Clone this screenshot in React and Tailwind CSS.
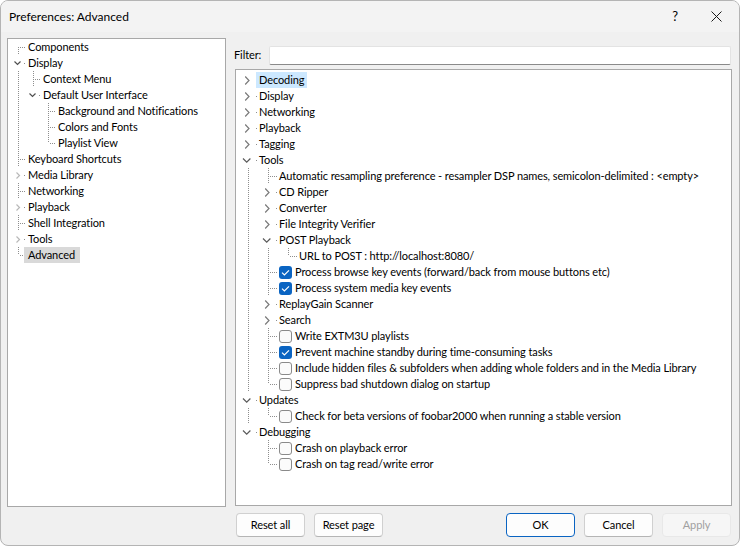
import React from "react";

// tree look per panel: cell width, line x inside the cell, chevron shapes
const LEFT = {
  cell: "w-[15px]",
  w: 15,
  x: 7,
  stub: 13,
  text: "-ml-[2px] pl-[4px] pr-[5px]",
  sel: "bg-[#d9d9d9]",
  closed: { points: "5.5,5.5 8.5,8.5 5.5,11.5", color: "#b8b8b8" },
  open: { points: "3.5,6.5 6.5,9.5 9.5,6.5", color: "#505050" },
};

const RIGHT = {
  cell: "w-[20px]",
  w: 20,
  x: 10,
  stub: 18,
  text: "-ml-[2px] pl-[3px] pr-[3px]",
  sel: "bg-[#cce8ff]",
  closed: { points: "7.2,4.5 11,8.5 7.2,12.5", color: "#7a7a7a" },
  open: { points: "5,6.5 8.7,10.2 12.4,6.5", color: "#5a5a5a" },
};

const leftRows = [
  { g: ["r"], label: "Components" },
  { g: ["o"], label: "Display" },
  { g: ["v", "t"], label: "Context Menu" },
  { g: ["v", "o"], label: "Default User Interface" },
  { g: ["v", "n", "t"], label: "Background and Notifications" },
  { g: ["v", "n", "t"], label: "Colors and Fonts" },
  { g: ["v", "n", "l"], label: "Playlist View" },
  { g: ["t"], label: "Keyboard Shortcuts" },
  { g: ["c"], label: "Media Library" },
  { g: ["t"], label: "Networking" },
  { g: ["c"], label: "Playback" },
  { g: ["t"], label: "Shell Integration" },
  { g: ["c"], label: "Tools" },
  { g: ["l"], label: "Advanced", selected: true },
];

const rightRows = [
  { g: ["c"], label: "Decoding", selected: true },
  { g: ["c"], label: "Display" },
  { g: ["c"], label: "Networking" },
  { g: ["c"], label: "Playback" },
  { g: ["c"], label: "Tagging" },
  { g: ["o"], label: "Tools" },
  { g: ["v", "t"], label: "Automatic resampling preference - resampler DSP names, semicolon-delimited : <empty>" },
  { g: ["v", "c"], label: "CD Ripper" },
  { g: ["v", "c"], label: "Converter" },
  { g: ["v", "c"], label: "File Integrity Verifier" },
  { g: ["v", "o"], label: "POST Playback" },
  { g: ["v", "v", "l"], label: "URL to POST : http://localhost:8080/" },
  { g: ["v", "t"], cb: true, label: "Process browse key events (forward/back from mouse buttons etc)" },
  { g: ["v", "t"], cb: true, label: "Process system media key events" },
  { g: ["v", "c"], label: "ReplayGain Scanner" },
  { g: ["v", "c"], label: "Search" },
  { g: ["v", "t"], cb: false, label: "Write EXTM3U playlists" },
  { g: ["v", "t"], cb: true, label: "Prevent machine standby during time-consuming tasks" },
  { g: ["v", "t"], cb: false, label: "Include hidden files & subfolders when adding whole folders and in the Media Library" },
  { g: ["v", "l"], cb: false, label: "Suppress bad shutdown dialog on startup" },
  { g: ["o"], label: "Updates" },
  { g: ["v", "l"], cb: false, label: "Check for beta versions of foobar2000 when running a stable version" },
  { g: ["o"], label: "Debugging" },
  { g: ["n", "t"], cb: false, label: "Crash on playback error" },
  { g: ["n", "l"], cb: false, label: "Crash on tag read/write error" },
];

const DOT = { stroke: "#8e8e8e", strokeWidth: 1, strokeDasharray: "1 1", shapeRendering: "crispEdges" };

// one indent column of the tree: dotted guide lines or an expander
function Cell({ type, t }) {
  const X = t.x + 0.5;
  const arm = type === "t" || type === "l" || type === "r";
  return (
    <svg width={t.w} height="16" className={`${t.cell} shrink-0`}>
      {(type === "v" || type === "t") && <line x1={X} y1="0" x2={X} y2="16" {...DOT} />}
      {type === "l" && <line x1={X} y1="0" x2={X} y2="8" {...DOT} />}
      {type === "r" && <line x1={X} y1="8" x2={X} y2="16" {...DOT} />}
      {arm && <line x1={X + 1} y1="8.5" x2={t.w} y2="8.5" {...DOT} />}
      {(type === "c" || type === "o") && (
        <>
          <rect x={t.stub} y="8" width="1" height="1" fill="#8e8e8e" />
          <polyline
            points={type === "c" ? t.closed.points : t.open.points}
            fill="none"
            stroke={type === "c" ? t.closed.color : t.open.color}
            strokeWidth="1.2"
          />
        </>
      )}
    </svg>
  );
}

function Check({ on }) {
  if (on) {
    return (
      <span className="ml-[1px] flex h-[13px] w-[13px] shrink-0 items-center justify-center rounded-[3px] bg-[#0a64c2]">
        <svg width="9" height="7" viewBox="0 0 9 7">
          <path d="M1 3.6 L3.4 5.9 L8 1.3" fill="none" stroke="white" strokeWidth="1.2" />
        </svg>
      </span>
    );
  }
  return <span className="ml-[1px] h-[13px] w-[13px] shrink-0 rounded-[3px] border border-[#8a8a8a] bg-[#fbfbfb]" />;
}

function Tree({ rows, t }) {
  return (
    <div className="flex flex-col">
      {rows.map((row, i) => (
        <div key={i} className="flex h-4 items-center">
          {row.g.map((g, j) => (
            <Cell key={j} type={g} t={t} />
          ))}
          {row.cb !== undefined ? (
            <>
              <Check on={row.cb} />
              <span className="ml-[3px] whitespace-nowrap leading-4">{row.label}</span>
            </>
          ) : (
            <span className={`h-4 whitespace-nowrap leading-4 ${t.text} ${row.selected ? t.sel : ""}`}>
              {row.label}
            </span>
          )}
        </div>
      ))}
    </div>
  );
}

function Button({ children, primary, disabled }) {
  let look = "border-[#d0d0d0] border-b-[#b5b5b5] bg-[#fdfdfd] text-black";
  if (primary) look = "border-[#0a64c2] bg-[#fdfdfd] text-black";
  if (disabled) look = "border-[#e8e8e8] bg-[#f6f6f6] text-[#a0a0a0]";
  return (
    <button className={`flex h-[24px] w-[69px] items-center justify-center rounded-[4px] border ${look}`}>
      {children}
    </button>
  );
}

export default function App() {
  return (
    <div className="h-[546px] w-[740px] bg-white text-[11px] tracking-[-0.1px] text-black [font-family:Lato,'Noto_Sans',sans-serif]">
      <div className="flex h-full w-full flex-col overflow-hidden rounded-[8px] border border-[#b4b4b4] bg-[#f0f0f0]">
        {/* title bar */}
        <div className="flex h-[31px] shrink-0 items-center bg-[#f3f3f3] pl-[8px] tracking-normal">
          <span className="text-[12px]">Preferences: Advanced</span>
          <span className="ml-auto mr-[33px] text-[13px]">?</span>
          <svg width="11" height="11" viewBox="0 0 11 11" className="mr-[17px]">
            <path d="M0.5 0.5 L10.5 10.5 M10.5 0.5 L0.5 10.5" stroke="#1a1a1a" strokeWidth="1" />
          </svg>
        </div>

        <div className="flex pl-[6px] pt-[6px]">
          {/* page tree */}
          <div className="h-[469px] w-[219px] shrink-0 border border-[#a8a8a8] bg-white pl-[3px]">
            <Tree rows={leftRows} t={LEFT} />
          </div>

          <div className="ml-[8px] flex w-[498px] flex-col">
            <div className="mt-[8px] flex h-[19px] items-center">
              <span className="w-[35px] shrink-0">Filter:</span>
              <div className="mr-[1px] h-[19px] flex-1 rounded-[2px] border border-[#e3e3e3] border-b-[#8a8a8a] bg-white" />
            </div>

            {/* advanced settings tree */}
            <div className="ml-[1px] mt-[4px] h-[437px] w-[497px] overflow-hidden border border-[#a8a8a8] bg-white pl-[2px] pt-[2px]">
              <Tree rows={rightRows} t={RIGHT} />
            </div>

            <div className="mt-[7px] flex pl-[2px] pr-[1px]">
              <Button>Reset all</Button>
              <div className="ml-[9px]">
                <Button>Reset page</Button>
              </div>
              <div className="ml-auto flex gap-[9px]">
                <Button primary>OK</Button>
                <Button>Cancel</Button>
                <Button disabled>Apply</Button>
              </div>
            </div>
          </div>
        </div>
      </div>
    </div>
  );
}
